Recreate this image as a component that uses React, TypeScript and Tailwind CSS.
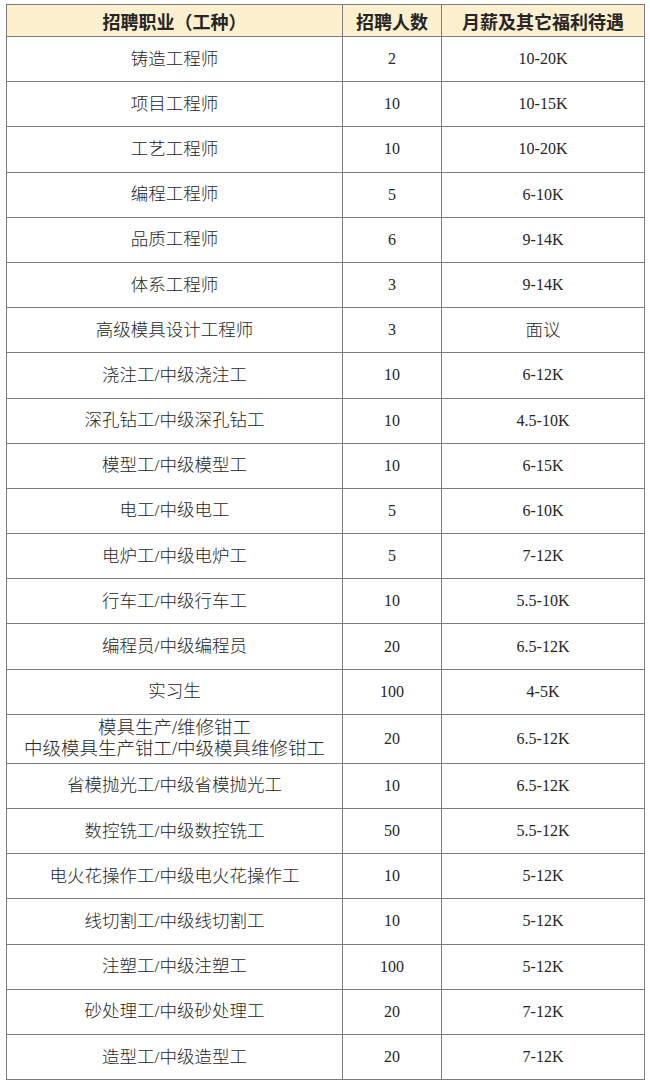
const ROWS: [string, string, string][] = [
  ["铸造工程师", "2", "10-20K"],
  ["项目工程师", "10", "10-15K"],
  ["工艺工程师", "10", "10-20K"],
  ["编程工程师", "5", "6-10K"],
  ["品质工程师", "6", "9-14K"],
  ["体系工程师", "3", "9-14K"],
  ["高级模具设计工程师", "3", "面议"],
  ["浇注工/中级浇注工", "10", "6-12K"],
  ["深孔钻工/中级深孔钻工", "10", "4.5-10K"],
  ["模型工/中级模型工", "10", "6-15K"],
  ["电工/中级电工", "5", "6-10K"],
  ["电炉工/中级电炉工", "5", "7-12K"],
  ["行车工/中级行车工", "10", "5.5-10K"],
  ["编程员/中级编程员", "20", "6.5-12K"],
  ["实习生", "100", "4-5K"],
  ["模具生产/维修钳工\n中级模具生产钳工/中级模具维修钳工", "20", "6.5-12K"],
  ["省模抛光工/中级省模抛光工", "10", "6.5-12K"],
  ["数控铣工/中级数控铣工", "50", "5.5-12K"],
  ["电火花操作工/中级电火花操作工", "10", "5-12K"],
  ["线切割工/中级线切割工", "10", "5-12K"],
  ["注塑工/中级注塑工", "100", "5-12K"],
  ["砂处理工/中级砂处理工", "20", "7-12K"],
  ["造型工/中级造型工", "20", "7-12K"],
];

const cell = "border border-[#7d7d7d] text-center align-middle";

export default function App() {
  return (
    <div className="min-h-[1087px] bg-white pl-[6px] pt-[4px]">
      <table className="w-[638px] table-fixed border-collapse text-[#262626]">
        <colgroup>
          <col className="w-[336px]" />
          <col className="w-[99px]" />
          <col className="w-[203px]" />
        </colgroup>
        <thead>
          <tr className="h-[32px] bg-[#fdf0cf] font-['Noto_Sans_CJK_SC',sans-serif] text-[18px] font-medium leading-none">
            <th className={cell}>招聘职业（工种）</th>
            <th className={cell}>招聘人数</th>
            <th className={cell}>月薪及其它福利待遇</th>
          </tr>
        </thead>
        <tbody className="font-['Liberation_Serif','Noto_Sans_CJK_SC',serif]">
          {ROWS.map(([job, count, pay]) => {
            const lines = job.split("\n");
            const tall = lines.length > 1;
            return (
              <tr key={job} className={tall ? "h-[49px]" : "h-[45.2px]"}>
                <td
                  className={`${cell} font-light ${tall ? "text-[18.5px] leading-[21px]" : "text-[17.5px] leading-[21px]"}`}
                >
                  {lines.map((l) => (
                    <div key={l}>{l}</div>
                  ))}
                </td>
                <td className={`${cell} text-[16px]`}>{count}</td>
                <td className={`${cell} ${pay === "面议" ? "text-[17.5px] font-light" : "text-[16px]"}`}>{pay}</td>
              </tr>
            );
          })}
        </tbody>
      </table>
    </div>
  );
}
